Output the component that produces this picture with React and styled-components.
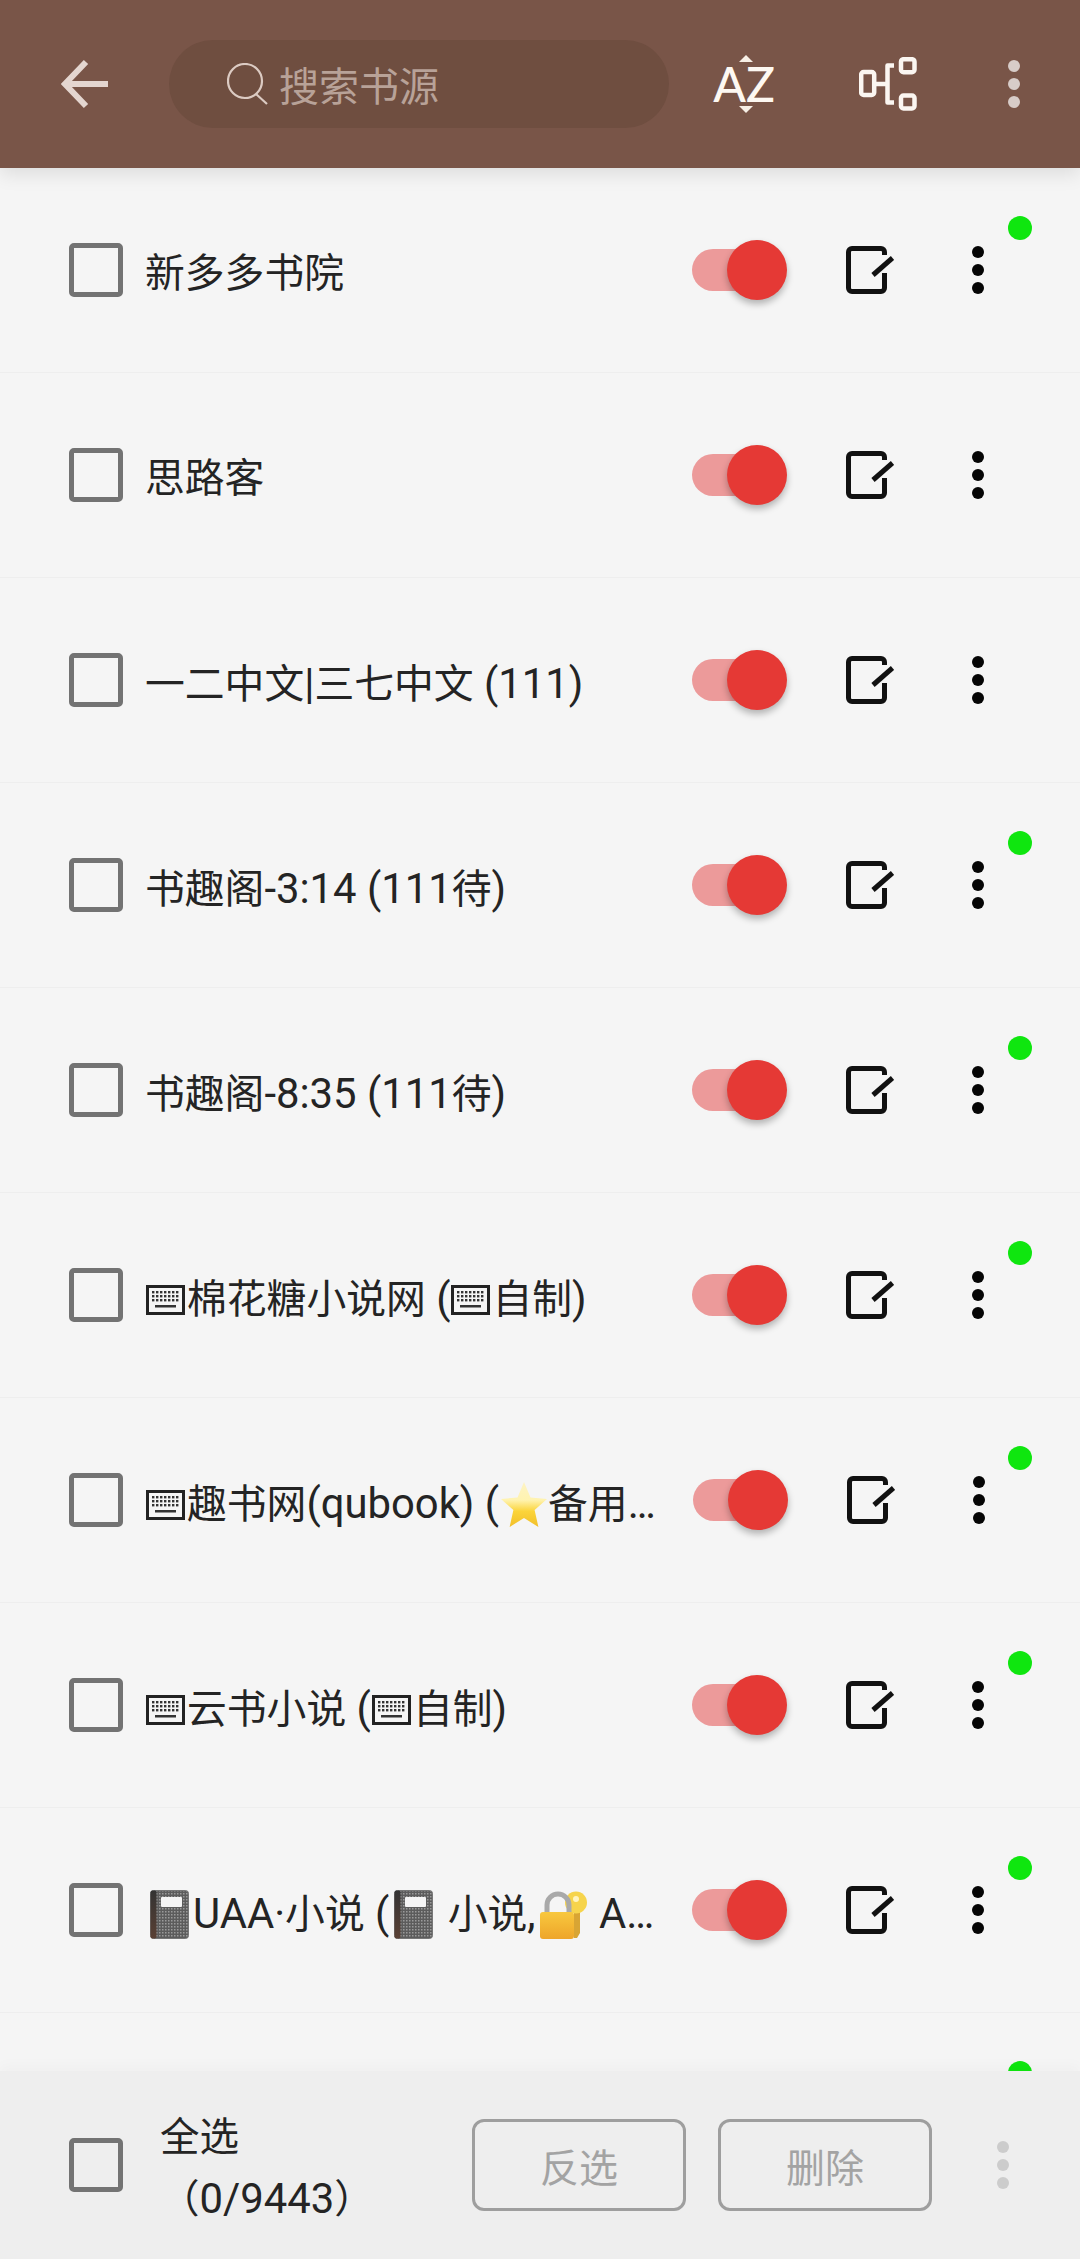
import styled, { createGlobalStyle } from "styled-components";

const GlobalStyle = createGlobalStyle`
  html, body {
    margin: 0;
    padding: 0;
    background: #f5f5f5;
  }
  * {
    box-sizing: border-box;
  }
`;

const Page = styled.div`
  width: 1080px;
  height: 2259px;
  display: flex;
  flex-direction: column;
  overflow: hidden;
  font-family: Roboto, "Noto Sans CJK SC", sans-serif;
  color: #242424;
`;

const Toolbar = styled.header`
  position: relative;
  z-index: 2;
  flex: 0 0 168px;
  display: flex;
  align-items: center;
  padding-left: 61px;
  background: #795548;
  box-shadow: 0 6px 18px rgba(0, 0, 0, 0.1);
`;

const BackIcon = styled.svg`
  width: 48px;
  height: 50px;
  flex: none;
`;

const SearchBox = styled.div`
  flex: 0 0 500px;
  height: 88px;
  margin-left: 60px;
  padding-left: 58px;
  display: flex;
  align-items: center;
  gap: 10px;
  border-radius: 44px;
  background: #6f4e40;
  color: #b8a298;
  font-size: 40px;
`;

const SearchIcon = styled.svg`
  width: 42px;
  height: 42px;
  flex: none;
`;

const SortButton = styled.span`
  position: relative;
  flex: none;
  width: 62px;
  height: 58px;
  margin-left: 44px;
  font-family: Lato, Roboto, sans-serif;
  font-size: 48px;
  font-weight: 500;
  line-height: 57px;
  text-align: center;
  color: #fdf8f2;

  &::before,
  &::after {
    content: "";
    position: absolute;
    left: 26px;
    border-left: 7px solid transparent;
    border-right: 7px solid transparent;
  }

  &::before {
    top: 0;
    border-bottom: 7px solid #f7efe6;
  }

  &::after {
    bottom: 0;
    border-top: 7px solid #f7efe6;
  }
`;

const GroupIcon = styled.svg`
  width: 58px;
  height: 54px;
  margin-left: 84px;
  flex: none;
`;

const Dots = styled.span`
  display: flex;
  flex-direction: column;
  gap: 6px;
  flex: none;
  margin-left: ${(p) => p.$left}px;

  i {
    width: 12px;
    height: 12px;
    border-radius: 50%;
    background: ${(p) => p.$color};
  }
`;

const List = styled.main`
  flex: 1;
  min-height: 0;
  overflow: hidden;
`;

const Row = styled.div`
  position: relative;
  height: 205px;
  display: flex;
  align-items: center;
  padding-left: 69px;
  border-bottom: 1.5px solid #eeeeee;
`;

const Checkbox = styled.span`
  flex: none;
  width: 54px;
  height: 54px;
  border: 5.5px solid #737373;
  border-radius: 5px;
`;

const Title = styled.div`
  flex: 0 0 510px;
  margin-left: 22px;
  padding-top: 8px;
  font-size: 39.8px;
  line-height: 54px;
  white-space: nowrap;
`;

const Latin = styled.span`
  font-size: 41.8px;
`;

const Emoji = styled.svg`
  display: inline-block;
  vertical-align: ${(p) => p.$drop}px;
  width: ${(p) => p.$w}px;
  height: ${(p) => p.$h}px;
  margin: -10px ${(p) => p.$after}px -10px ${(p) => p.$before}px;
`;

const Switch = styled.span`
  position: relative;
  flex: none;
  width: 95px;
  height: 60px;
  margin-left: 37px;

  &::before {
    content: "";
    position: absolute;
    left: 0;
    top: 9px;
    width: 78px;
    height: 42px;
    border-radius: 21px;
    background: #ec9a9a;
  }

  &::after {
    content: "";
    position: absolute;
    right: 0;
    top: 0;
    width: 60px;
    height: 60px;
    border-radius: 50%;
    background: #e53935;
    box-shadow: 0 4px 7px rgba(0, 0, 0, 0.28);
  }
`;

const EditIcon = styled.svg`
  flex: none;
  width: 48px;
  height: 48px;
  margin-left: 59px;
`;

const StatusDot = styled.span`
  position: absolute;
  left: 1008px;
  top: 48px;
  width: 24px;
  height: 24px;
  border-radius: 50%;
  background: #0fe60f;
`;

const BottomBar = styled.footer`
  position: relative;
  z-index: 2;
  flex: 0 0 188px;
  display: flex;
  align-items: center;
  padding-left: 69px;
  background: #eeeeee;
  box-shadow: 0 -6px 12px rgba(0, 0, 0, 0.025);
`;

const SelectAll = styled.div`
  flex: 0 0 312px;
  margin-left: 37px;
  margin-top: 7px;
  font-size: 39.5px;
  line-height: 61px;
`;

const Counter = styled.div`
  white-space: nowrap;
`;

const ActionButton = styled.span`
  flex: none;
  width: 214px;
  height: 92px;
  display: flex;
  align-items: center;
  justify-content: center;
  margin-right: 32px;
  border: 3px solid #9e9e9e;
  border-radius: 12px;
  color: #a3a3a3;
  font-size: 39px;
`;

const sources = [
  { name: "新多多书院", online: true },
  { name: "思路客" },
  { name: "一二中文|三七中文 (111)" },
  { name: "书趣阁-3:14 (111待)", online: true },
  { name: "书趣阁-8:35 (111待)", online: true },
  { name: ["kb", "棉花糖小说网 (", "kb", "自制)"], online: true },
  { name: ["kb", "趣书网(qubook) (", "star", "备用…"], online: true },
  { name: ["kb", "云书小说 (", "kb", "自制)"], online: true },
  { name: ["book", "UAA·小说 (", "book", " 小说,", "lock", " A…"], online: true },
  { name: "", online: true },
];

function Keyboard() {
  return (
    <Emoji $w={39} $h={30} $drop={8} $before={1} $after={2} viewBox="0 0 39 30">
      <rect x="1.5" y="1.5" width="36" height="27" fill="none" stroke="#222" strokeWidth="3" />
      {[6, 10, 14, 18, 22, 26, 30].map((x) =>
        [6, 10, 14].map((y) => <rect key={x + "-" + y} x={x} y={y} width="2.4" height="2.4" fill="#333" />)
      )}
      <rect x="9" y="20" width="21" height="2.5" fill="#333" />
    </Emoji>
  );
}

function Star() {
  return (
    <Emoji $w={48} $h={47} $drop={0} $before={1} $after={0} viewBox="0 0 48 47">
      <defs>
        <linearGradient id="starFill" x1="0" y1="0" x2="0" y2="1">
          <stop offset="0" stopColor="#fdf3c4" />
          <stop offset="0.4" stopColor="#fff3b0" />
          <stop offset="0.65" stopColor="#fbd43a" />
          <stop offset="1" stopColor="#f2bf2a" />
        </linearGradient>
      </defs>
      <path
        d="M24 1 L30.5 16.5 L47 18 L34.6 29 L38.4 46 L24 37 L9.6 46 L13.4 29 L1 18 L17.5 16.5 Z"
        fill="url(#starFill)"
        strokeLinejoin="round"
      />
    </Emoji>
  );
}

function Notebook() {
  return (
    <Emoji $w={39} $h={49} $drop={-1} $before={5} $after={4} viewBox="0 0 39 49">
      <defs>
        <pattern id="speckle" width="3" height="3" patternUnits="userSpaceOnUse">
          <rect width="3" height="3" fill="#5c5c5c" />
          <rect width="1.5" height="1.5" fill="#9a9a9a" />
        </pattern>
        <linearGradient id="spine" x1="0" y1="0" x2="0" y2="1">
          <stop offset="0" stopColor="#333" />
          <stop offset="1" stopColor="#5a4034" />
        </linearGradient>
      </defs>
      <rect x="0.5" y="0.5" width="38" height="48" rx="3" fill="url(#speckle)" stroke="#777" />
      <rect x="0.5" y="0.5" width="6" height="48" rx="2" fill="url(#spine)" />
      <rect x="11" y="7" width="21" height="10" rx="1" fill="#f4f4f4" />
    </Emoji>
  );
}

function LockKey() {
  return (
    <Emoji $w={49} $h={49} $drop={-2} $before={3} $after={1} viewBox="0 0 49 49">
      <defs>
        <linearGradient id="lockBody" x1="0" y1="0" x2="0" y2="1">
          <stop offset="0" stopColor="#f8c83e" />
          <stop offset="1" stopColor="#eea52a" />
        </linearGradient>
      </defs>
      <path d="M35 16 H41 V42 L38 47 H35 Z" fill="#d8a534" />
      <circle cx="37" cy="11.5" r="11" fill="#f6d44c" />
      <circle cx="37" cy="8" r="3" fill="#fff4c0" />
      <path d="M8 23 V14 a11 11 0 0 1 22 0 V23" fill="none" stroke="#a9a9a9" strokeWidth="5" />
      <rect x="1" y="21" width="34" height="27" rx="3" fill="url(#lockBody)" />
    </Emoji>
  );
}

const glyphs = { kb: Keyboard, star: Star, book: Notebook, lock: LockKey };

// latin runs sit a little larger than the cjk ones
function MixedText({ text }) {
  return text.split(/([\x20-\x7e·…]+)/).map((run, i) => (i % 2 ? <Latin key={i}>{run}</Latin> : run));
}

function SourceName({ name }) {
  if (typeof name === "string") return <MixedText text={name} />;
  return name.map((part, i) => {
    const Glyph = glyphs[part];
    return Glyph ? <Glyph key={i} /> : <MixedText key={i} text={part} />;
  });
}

function ThreeDots({ color, left }) {
  return (
    <Dots $color={color} $left={left}>
      <i />
      <i />
      <i />
    </Dots>
  );
}

export default function App() {
  return (
    <Page>
      <GlobalStyle />
      <Toolbar>
        <BackIcon viewBox="0 0 48 50" fill="none" stroke="#e4d6d0" strokeWidth="6">
          <path d="M47 25 H4 M25 3 L4 25 L25 47" />
        </BackIcon>
        <SearchBox>
          <SearchIcon viewBox="0 0 42 42" fill="none" stroke="#dccbc3" strokeWidth="2.2">
            <circle cx="18" cy="18" r="17" />
            <path d="M29 31 L40 41" />
          </SearchIcon>
          搜索书源
        </SearchBox>
        <SortButton>AZ</SortButton>
        <GroupIcon viewBox="0 0 58 54" fill="none" stroke="#fbf6f1" strokeWidth="4.5" strokeLinejoin="round">
          <rect x="2.2" y="15" width="13" height="23" rx="2.5" />
          <path d="M15 27 H28 M35 8.5 H28.5 V45.5 H35" />
          <rect x="42" y="2.2" width="13.5" height="13" rx="2.5" />
          <rect x="42" y="38.5" width="13.5" height="13" rx="2.5" />
        </GroupIcon>
        <ThreeDots color="#d7ccc8" left={91} />
      </Toolbar>
      <List>
        {sources.map((source, i) => (
          <Row key={i}>
            <Checkbox />
            <Title>
              <SourceName name={source.name} />
            </Title>
            <Switch />
            <EditIcon viewBox="0 0 48 48" fill="none" stroke="#111" strokeWidth="5">
              <path d="M38.5 9 V6 a3.5 3.5 0 0 0 -3.5 -3.5 H6 a3.5 3.5 0 0 0 -3.5 3.5 V42 a3.5 3.5 0 0 0 3.5 3.5 H35 a3.5 3.5 0 0 0 3.5 -3.5 V27" />
              <path d="M27 29 L46.5 12" />
            </EditIcon>
            <ThreeDots color="#050505" left={78} />
            {source.online && <StatusDot />}
          </Row>
        ))}
      </List>
      <BottomBar>
        <Checkbox />
        <SelectAll>
          全选
          <Counter>
            <MixedText text="（0/9443）" />
          </Counter>
        </SelectAll>
        <ActionButton>反选</ActionButton>
        <ActionButton>删除</ActionButton>
        <ThreeDots color="#cccccc" left={33} />
      </BottomBar>
    </Page>
  );
}
